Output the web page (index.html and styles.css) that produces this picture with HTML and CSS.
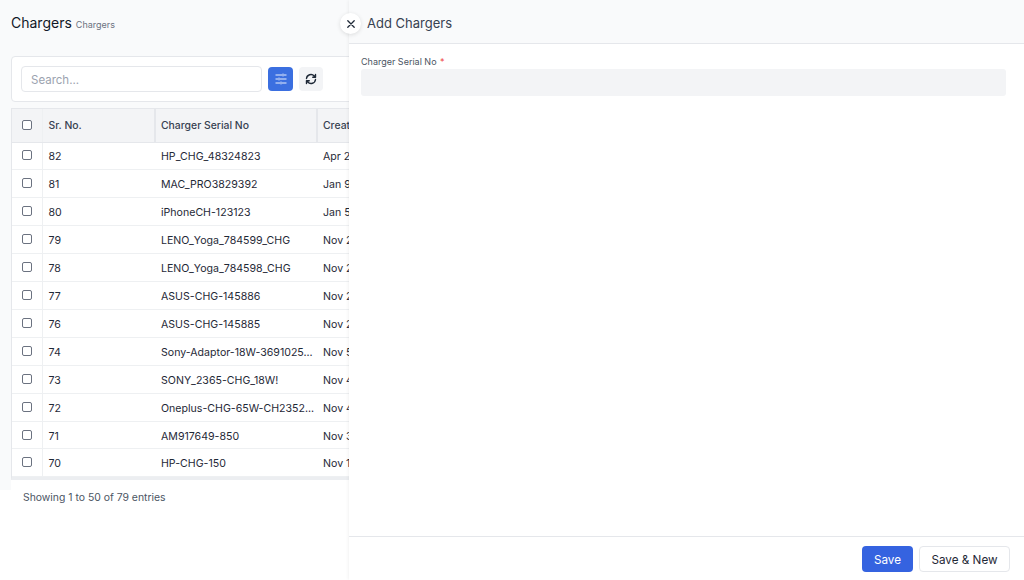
FILE: index.html
```html
<!DOCTYPE html>
<html lang="en">
<head>
    <meta charset="UTF-8">
    <meta name="viewport" content="width=device-width, initial-scale=1.0">
    <title>Chargers</title>
    <link rel="stylesheet" href="styles.css">
</head>
<body>
    <main class="page">
        <div class="page-top">
            <header class="page-head">
                <h1>Chargers</h1>
                <span class="crumb">Chargers</span>
            </header>
            <div class="toolbar">
                <input class="search" type="text" placeholder="Search...">
                <button class="tool-btn tool-primary" aria-label="Filters">
                    <svg width="12" height="12" viewBox="0 0 12 12" fill="none" stroke="currentColor" stroke-width="0.9">
                        <path d="M0.5 2h6.5M9 2h2.5M8 0.6v2.8M0.5 6h2.5M5 6h6.5M4 4.6v2.8M0.5 10h4.5M7 10h4.5M6 8.6v2.8"/>
                    </svg>
                </button>
                <button class="tool-btn" aria-label="Refresh">
                    <svg width="12" height="12" viewBox="0 0 24 24" fill="none" stroke="currentColor" stroke-width="2.8" stroke-linecap="round" stroke-linejoin="round">
                        <path d="M3 11a9 9 0 0 1 15.5-5.2L21 8.5M21 3v5.5h-5.5"/>
                        <path d="M21 13a9 9 0 0 1-15.5 5.2L3 15.5M3 21v-5.5h5.5"/>
                    </svg>
                </button>
            </div>
            <div class="table-wrap">
                <table class="grid">
                    <thead>
                        <tr>
                            <th class="col-check"><span class="check"></span></th>
                            <th class="col-sr">Sr. No.</th>
                            <th class="col-serial">Charger Serial No</th>
                            <th class="col-date">Created</th>
                        </tr>
                    </thead>
                    <tbody>
                        <tr><td class="col-check"><span class="check"></span></td><td>82</td><td>HP_CHG_48324823</td><td>Apr 2</td></tr>
                        <tr><td class="col-check"><span class="check"></span></td><td>81</td><td>MAC_PRO3829392</td><td>Jan 9</td></tr>
                        <tr><td class="col-check"><span class="check"></span></td><td>80</td><td>iPhoneCH-123123</td><td>Jan 5</td></tr>
                        <tr><td class="col-check"><span class="check"></span></td><td>79</td><td>LENO_Yoga_784599_CHG</td><td>Nov 2</td></tr>
                        <tr><td class="col-check"><span class="check"></span></td><td>78</td><td>LENO_Yoga_784598_CHG</td><td>Nov 2</td></tr>
                        <tr><td class="col-check"><span class="check"></span></td><td>77</td><td>ASUS-CHG-145886</td><td>Nov 2</td></tr>
                        <tr><td class="col-check"><span class="check"></span></td><td>76</td><td>ASUS-CHG-145885</td><td>Nov 2</td></tr>
                        <tr><td class="col-check"><span class="check"></span></td><td>74</td><td>Sony-Adaptor-18W-3691025...</td><td>Nov 5</td></tr>
                        <tr><td class="col-check"><span class="check"></span></td><td>73</td><td>SONY_2365-CHG_18W!</td><td>Nov 4</td></tr>
                        <tr><td class="col-check"><span class="check"></span></td><td>72</td><td>Oneplus-CHG-65W-CH2352...</td><td>Nov 4</td></tr>
                        <tr><td class="col-check"><span class="check"></span></td><td>71</td><td>AM917649-850</td><td>Nov 3</td></tr>
                        <tr><td class="col-check"><span class="check"></span></td><td>70</td><td>HP-CHG-150</td><td>Nov 1</td></tr>
                    </tbody>
                </table>
            </div>
            <p class="entries">Showing 1 to 50 of 79 entries</p>
        </div>
    </main>

    <aside class="drawer">
        <button class="drawer-close" aria-label="Close">
            <svg width="8" height="8" viewBox="0 0 10 10" fill="none" stroke="currentColor" stroke-width="1.6" stroke-linecap="round">
                <path d="M1 1l8 8M9 1l-8 8"/>
            </svg>
        </button>
        <div class="drawer-head">Add Chargers</div>
        <form class="drawer-body">
            <label class="field-label">Charger Serial No <span class="req">*</span></label>
            <input class="field" type="text">
        </form>
        <div class="drawer-foot">
            <button class="btn btn-save" type="button">Save</button>
            <button class="btn btn-new" type="button">Save &amp; New</button>
        </div>
    </aside>
</body>
</html>
```
FILE: styles.css
```css
* {
    box-sizing: border-box;
}
html, body {
    margin: 0;
    padding: 0;
    height: 100%;
    overflow: hidden;
}
body {
    font-family: Inter, "Liberation Sans", sans-serif;
    background-color: #fff;
    color: #111827;
}
.page {
    width: 1024px;
    height: 580px;
    overflow: hidden;
}
.page-top {
    background-color: #f9fafb;
    height: 490px;
    padding: 0 0 0 11px;
}
.page-head {
    display: flex;
    align-items: baseline;
    gap: 4px;
    height: 56px;
    padding-top: 13px;
}
.page-head h1 {
    margin: 0;
    font-size: 14px;
    line-height: 20px;
    font-weight: 400;
    color: #111827;
}
.crumb {
    font-size: 9px;
    color: #6b7280;
}
.toolbar {
    display: flex;
    align-items: center;
    gap: 6px;
    width: 1002px;
    height: 46px;
    padding: 0 9px;
    background-color: #fff;
    border: 1px solid #e5e7eb;
    border-radius: 4px;
}
.search {
    width: 241px;
    height: 26px;
    padding: 1px 9px 0;
    border: 1px solid #e5e7eb;
    border-radius: 4px;
    font: 11.5px Inter, "Liberation Sans", sans-serif;
    background-color: #fff;
}
.search::placeholder {
    color: #9ca3af;
}
.tool-btn {
    display: flex;
    align-items: center;
    justify-content: center;
    width: 24px;
    height: 24px;
    padding: 0;
    border: 0;
    border-radius: 4px;
    background-color: #f3f4f6;
    color: #1f2937;
}
.tool-primary {
    width: 25px;
    background-color: #3b6fe0;
    color: #fff;
}
.table-wrap {
    width: 1002px;
    height: 372px;
    margin-top: 6px;
    background-color: #fff;
    border: 1px solid #e5e7eb;
    border-bottom: 3px solid #eceef1;
    overflow: hidden;
}
.grid {
    border-collapse: collapse;
    table-layout: fixed;
    width: 1000px;
    font-size: 10.6px;
    color: #1f2937;
}
.grid th {
    height: 33px;
    padding: 0 6px;
    text-align: left;
    font-weight: 500;
    font-size: 10.4px;
    color: #374151;
    background-color: #f3f4f6;
    border-right: 2px solid #e5e7eb;
    border-bottom: 1px solid #e5e7eb;
}
.grid th.col-serial,
.grid th.col-date {
    padding-left: 5px;
}
.grid td {
    height: 27.92px;
    padding: 2px 6px 0;
    white-space: nowrap;
    border-bottom: 1px solid #eef0f2;
}
.grid .col-check {
    width: 30px;
    padding: 0 0 1px 10px;
    border-right: 1px solid #eef0f2;
}
.grid th.col-check {
    padding-bottom: 0;
}
.col-sr {
    width: 113px;
}
.col-serial {
    width: 162px;
}
.check {
    display: block;
    width: 10px;
    height: 10px;
    background-color: #fff;
    border: 1px solid #6b7280;
    border-radius: 2px;
}
.entries {
    margin: 0;
    height: 40px;
    padding: 11px 0 0 12px;
    font-size: 10.4px;
    line-height: 14px;
    color: #4b5563;
    background-color: #fff;
}
.drawer {
    position: absolute;
    top: 0;
    left: 349px;
    width: 675px;
    height: 580px;
    display: flex;
    flex-direction: column;
    background-color: #fff;
    box-shadow: 0 0 4px rgba(0, 0, 0, 0.08);
}
.drawer-close {
    position: absolute;
    top: 13px;
    left: -9px;
    display: flex;
    align-items: center;
    justify-content: center;
    width: 21px;
    height: 21px;
    padding: 0;
    border: 0;
    border-radius: 50%;
    background-color: #fff;
    color: #1f2937;
    box-shadow: 0 1px 4px rgba(0, 0, 0, 0.12);
}
.drawer-head {
    height: 44px;
    padding: 15px 0 0 18px;
    background-color: #f9fafb;
    border-bottom: 1px solid #e5e7eb;
    font-size: 13px;
    line-height: 17px;
    color: #374151;
}
.drawer-body {
    flex: 1;
    padding: 12px 18px 0 12px;
}
.field-label {
    display: block;
    height: 13px;
    font-size: 9px;
    line-height: 11px;
    color: #4b5563;
}
.req {
    margin-left: 1px;
    color: #ef4444;
}
.field {
    display: block;
    width: 645px;
    height: 27px;
    border: 0;
    border-radius: 3px;
    background-color: #f3f4f6;
}
.drawer-foot {
    display: flex;
    justify-content: flex-end;
    gap: 6px;
    height: 44px;
    padding: 9px 14px 0 0;
    border-top: 1px solid #e5e7eb;
}
.btn {
    height: 26px;
    padding: 1px 0 0;
    border-radius: 4px;
    font: 11.7px Inter, "Liberation Sans", sans-serif;
}
.btn-save {
    width: 51px;
    border: 0;
    background-color: #3563e0;
    color: #fff;
}
.btn-new {
    width: 91px;
    border: 1px solid #e5e7eb;
    background-color: #fff;
    color: #1f2937;
}
```
